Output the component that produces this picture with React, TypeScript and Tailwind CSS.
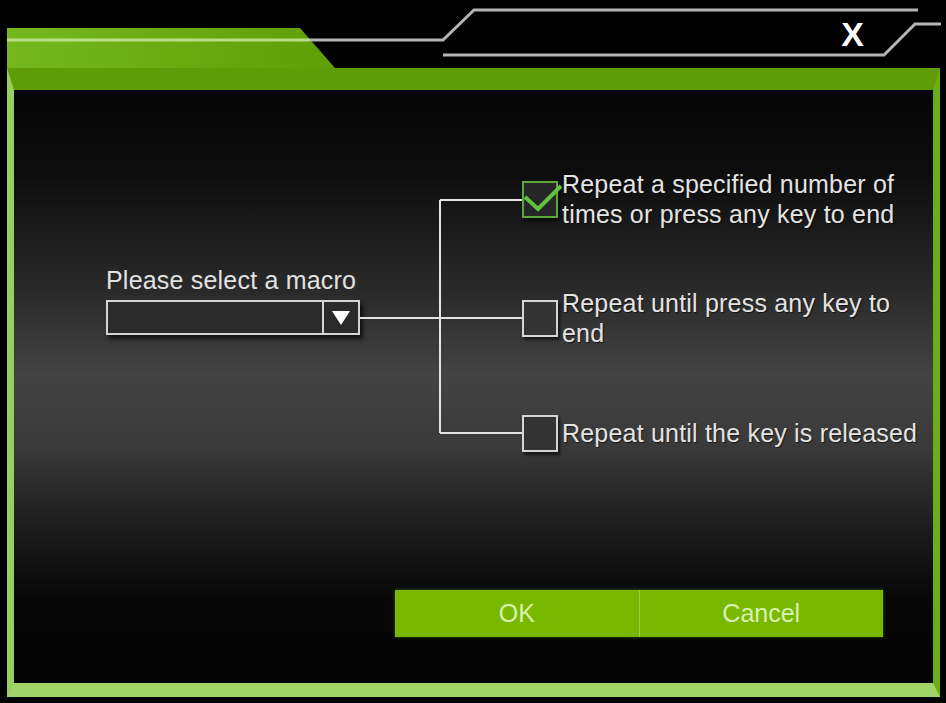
import { useState } from "react";

const options = [
  { id: "count", lines: ["Repeat a specified number of", "times or press any key to end"] },
  { id: "press", lines: ["Repeat until press any key to", "end"] },
  { id: "release", lines: ["Repeat until the key is released"] },
];

function Checkbox({ checked }: { checked: boolean }) {
  return (
    <div
      className={`relative h-[37px] w-[36px] shrink-0 border-2 shadow-[2px_3px_3px_rgba(0,0,0,0.6)] ${
        checked ? "border-[#58a93a] bg-[#262626]" : "border-[#d6d6d6] bg-[#343434]"
      }`}
    >
      {checked && (
        <svg className="absolute -top-[6px] left-0 overflow-visible" width="40" height="40" viewBox="0 0 40 40">
          <polyline points="1,20 14,32 37,9" fill="none" stroke="#62c23a" strokeWidth="4" strokeLinejoin="miter" />
        </svg>
      )}
    </div>
  );
}

export default function App() {
  const [selected, setSelected] = useState("count");

  return (
    <div className="flex h-[703px] w-[946px] flex-col overflow-hidden bg-black font-['Liberation_Sans',Arial,sans-serif]">
      {/* title chrome */}
      <div className="relative flex h-[68px] shrink-0 justify-end">
        <svg className="absolute inset-0" width="946" height="68" viewBox="0 0 946 68">
          <defs>
            <linearGradient id="tab" x1="0" y1="0" x2="1" y2="0">
              <stop offset="0" stopColor="#75b81e" />
              <stop offset="1" stopColor="#5f9e06" />
            </linearGradient>
          </defs>
          <polygon points="7,28 300,28 335,68 7,68" fill="url(#tab)" />
          <line x1="7" y1="40" x2="310" y2="40" stroke="#b9dd86" strokeWidth="3" />
          <polyline points="310,40 443,40 474,10 918,10" fill="none" stroke="#b4b4b4" strokeWidth="3" />
          <polyline points="443,55 884,55 915,24 941,24" fill="none" stroke="#b4b4b4" strokeWidth="3" />
        </svg>
        <button
          type="button"
          className="relative mr-[82px] mt-[16px] h-[36px] text-[34px] font-bold leading-[36px] text-white"
        >
          X
        </button>
      </div>

      {/* frame */}
      <div className="ml-[7px] flex h-[629px] w-[933px] flex-col border-b-[14px] border-l-[7px] border-r-[7px] border-t-[22px] border-b-[#9fd466] border-l-[#98cf5c] border-r-[#6aad16] border-t-[#5e9c08]">
        <div className="flex flex-1 flex-col bg-[linear-gradient(180deg,#050505_0%,#0d0d0d_14%,#2a2a2a_34%,#434343_48%,#3a3a3a_60%,#1c1c1c_74%,#070707_86%,#030303_100%)]">
          <div className="flex items-start pl-[92px] pt-[79px]">
            {/* macro select */}
            <div className="mt-[97px] w-[254px]">
              <div className="text-[25px] leading-[28px] tracking-[0.2px] text-[#e2e2e2]">Please select a macro</div>
              <div className="mt-[6px] flex h-[35px] border-2 border-[#d4d4d4] bg-[#2a2a2a] shadow-[3px_4px_4px_rgba(0,0,0,0.7)]">
                <div className="flex-1" />
                <div className="flex w-[36px] items-center justify-center border-l-2 border-[#d4d4d4]">
                  <svg width="20" height="16" viewBox="0 0 20 16">
                    <polygon points="1,1 19,1 10,15" fill="#ffffff" />
                  </svg>
                </div>
              </div>
            </div>

            {/* connectors */}
            <svg className="shrink-0" width="162" height="270" viewBox="0 0 162 270">
              <g stroke="#e4e4e4" strokeWidth="2" fill="none">
                <line x1="0" y1="149" x2="162" y2="149" />
                <line x1="80" y1="31" x2="80" y2="264" />
                <line x1="80" y1="31" x2="162" y2="31" />
                <line x1="80" y1="264" x2="162" y2="264" />
              </g>
            </svg>

            {/* repeat options */}
            <div className="flex flex-col">
              {options.map((o, i) => (
                <button
                  key={o.id}
                  type="button"
                  onClick={() => setSelected(o.id)}
                  className={`flex h-[60px] items-center gap-[4px] text-left ${
                    i === 1 ? "mt-[59px]" : i === 2 ? "mt-[55px]" : ""
                  }`}
                >
                  <Checkbox checked={selected === o.id} />
                  <span className="whitespace-nowrap text-[25px] leading-[30px] tracking-[0.2px] text-[#e4e4e4] [text-shadow:1px_1px_1px_rgba(0,0,0,0.6)]">
                    {o.lines.map((l, j) => (
                      <span key={j} className="block">
                        {l}
                      </span>
                    ))}
                  </span>
                </button>
              ))}
            </div>
          </div>

          {/* actions */}
          <div className="mb-[46px] mt-auto flex pl-[381px]">
            <div className="flex h-[47px] w-[488px] bg-[#78b800] shadow-[0_0_3px_rgba(120,184,0,0.5)]">
              <button type="button" className="flex-1 border-r border-[#9ccd4a] text-[25px] text-[#d8f2ad]">
                OK
              </button>
              <button type="button" className="flex-1 text-[25px] text-[#d8f2ad]">
                Cancel
              </button>
            </div>
          </div>
        </div>
      </div>
    </div>
  );
}
